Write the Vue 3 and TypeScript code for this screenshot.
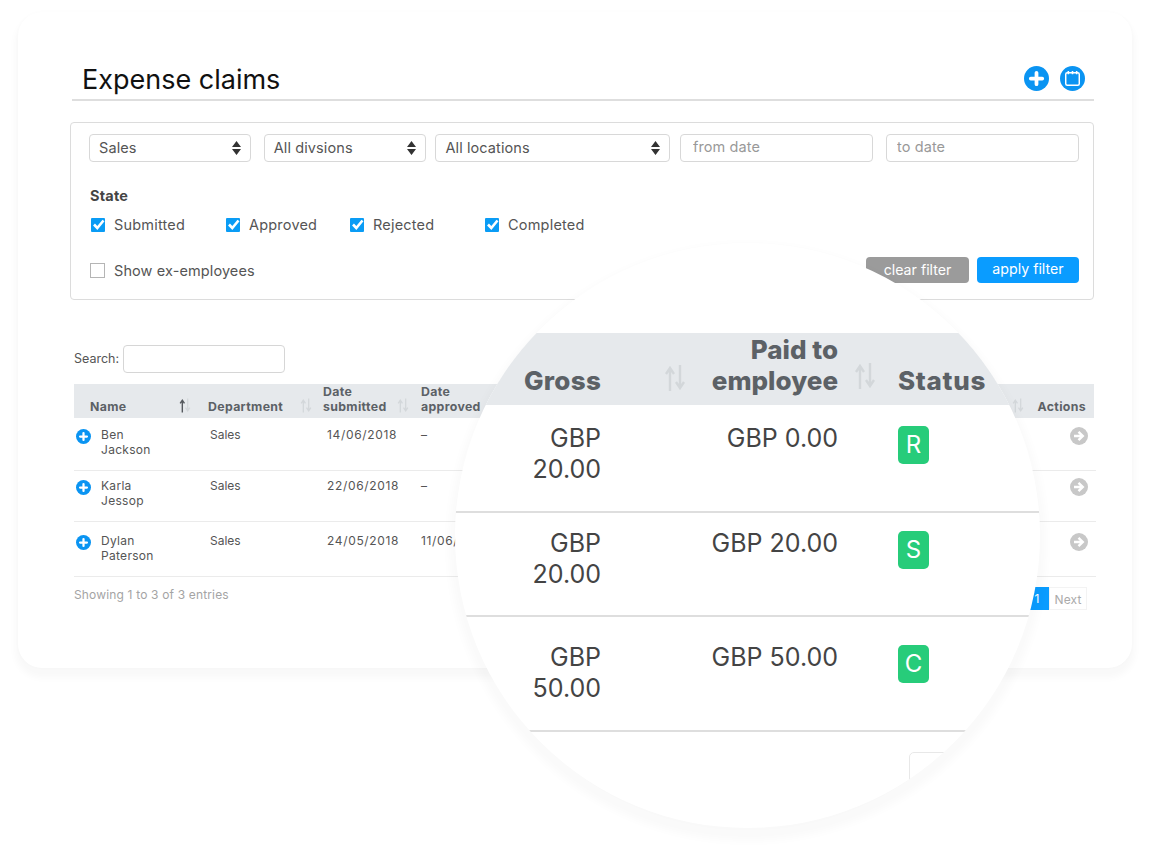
<script setup lang="ts">
const selects = [
  { label: 'Sales', cls: 'w1' },
  { label: 'All divsions', cls: 'w2' },
  { label: 'All locations', cls: 'w3' },
]
const states = [
  { label: 'Submitted', cls: 's1' },
  { label: 'Approved', cls: 's2' },
  { label: 'Rejected', cls: 's3' },
  { label: 'Completed', cls: 's4' },
]
const rows = [
  { first: 'Ben', last: 'Jackson', dept: 'Sales', sub: '14/06/2018', app: '–', cls: 'r1' },
  { first: 'Karla', last: 'Jessop', dept: 'Sales', sub: '22/06/2018', app: '–', cls: 'r2' },
  { first: 'Dylan', last: 'Paterson', dept: 'Sales', sub: '24/05/2018', app: '11/06/2018', cls: 'r3' },
]
const zoomRows = [
  { gross: '20.00', paid: 'GBP 0.00', status: 'R', cls: 'z1' },
  { gross: '20.00', paid: 'GBP 20.00', status: 'S', cls: 'z2' },
  { gross: '50.00', paid: 'GBP 50.00', status: 'C', cls: 'z3' },
]
</script>

<template>
  <div class="stage">
    <svg class="defs" width="0" height="0" aria-hidden="true">
      <symbol id="sort" viewBox="0 0 22 28">
        <path d="M6 27V6M2 10l4-6 4 6" fill="none" stroke="currentColor" stroke-width="2.4" />
        <path d="M16 1v21M12 18l4 6 4-6" fill="none" stroke="currentColor" stroke-width="2.4" />
      </symbol>
      <symbol id="sort-up" viewBox="0 0 22 28">
        <path d="M6 27V6M2 10l4-6 4 6" fill="none" stroke="#55595e" stroke-width="2.6" />
        <path d="M16 1v21M12 18l4 6 4-6" fill="none" stroke="#d3d7da" stroke-width="2.4" />
      </symbol>
      <symbol id="plus" viewBox="0 0 24 24">
        <circle cx="12" cy="12" r="12" fill="#0a94f2" />
        <path d="M12 6.500v11M6.500 12h11" stroke="#fff" stroke-width="3.6" stroke-linecap="round" />
      </symbol>
      <symbol id="go" viewBox="0 0 18 18">
        <circle cx="9" cy="9" r="9" fill="#c8c8c8" />
        <path d="M4 9h8M8.500 4.800 12.800 9l-4.300 4.200" fill="none" stroke="#fff" stroke-width="2.4" />
      </symbol>
      <symbol id="check" viewBox="0 0 15 15">
        <rect width="14" height="14" y="1" rx="1" fill="#0a9cf5" />
        <path d="M3 7.500 6.300 11 12.500 3.500" fill="none" stroke="#fff" stroke-width="2.6" />
      </symbol>
      <symbol id="updown" viewBox="0 0 9 14">
        <path d="M4.500 0 9 6H0zM4.500 14 0 8h9z" fill="#333" />
      </symbol>
    </svg>

    <main class="card">
      <header class="head">
        <h1>Expense claims</h1>
        <div class="head-icons">
          <svg class="round"><use href="#plus" /></svg>
          <svg class="round" viewBox="0 0 24 24">
            <circle cx="12" cy="12" r="12" fill="#0a94f2" />
            <rect x="5.500" y="6.500" width="13" height="12" rx="1.500" fill="none" stroke="#fff" stroke-width="1.400" />
            <path d="M8 4.800v3M12 4.800v3M16 4.800v3" stroke="#fff" stroke-width="1.500" />
          </svg>
        </div>
      </header>

      <section class="panel">
        <div class="filters">
          <div v-for="s in selects" :key="s.label" class="select" :class="s.cls">
            <span>{{ s.label }}</span>
            <svg class="updown"><use href="#updown" /></svg>
          </div>
          <input class="date d1" placeholder="from date" />
          <input class="date d2" placeholder="to date" />
        </div>

        <h2>State</h2>
        <div class="states">
          <label v-for="s in states" :key="s.label" class="state" :class="s.cls">
            <svg class="tick"><use href="#check" /></svg>
            <span>{{ s.label }}</span>
          </label>
        </div>

        <div class="panel-foot">
          <label class="ex"><i class="box"></i><span>Show ex-employees</span></label>
          <div class="buttons">
            <button class="btn grey">clear filter</button>
            <button class="btn blue">apply filter</button>
          </div>
        </div>
      </section>

      <div class="search">
        <span>Search:</span>
        <input />
      </div>

      <div class="thead trow">
        <div class="c-name">
          <span>Name</span>
          <svg class="sort"><use href="#sort-up" /></svg>
        </div>
        <div class="c-dept">
          <span>Department</span>
          <svg class="sort"><use href="#sort" /></svg>
        </div>
        <div class="c-sub">
          <span>Date<br />submitted</span>
          <svg class="sort"><use href="#sort" /></svg>
        </div>
        <div class="c-app"><span>Date<br />approved</span></div>
        <div class="c-act">
          <svg class="sort"><use href="#sort" /></svg>
          <span>Actions</span>
        </div>
      </div>

      <div v-for="r in rows" :key="r.first" class="tbody trow" :class="r.cls">
        <div class="c-name cell-name">
          <svg class="expand"><use href="#plus" /></svg>
          <span>{{ r.first }}<br />{{ r.last }}</span>
        </div>
        <div class="c-dept">{{ r.dept }}</div>
        <div class="c-sub">{{ r.sub }}</div>
        <div class="c-app">{{ r.app }}</div>
        <div class="c-act"><svg class="go"><use href="#go" /></svg></div>
      </div>

      <footer class="tfoot">
        <span>Showing 1 to 3 of 3 entries</span>
        <div class="pager">
          <span class="page">1</span>
          <span class="next">Next</span>
        </div>
      </footer>
    </main>

    <aside class="lens">
      <div class="z-head z-grid">
        <div class="z1c"><span>Gross</span><svg class="z-sort s-a"><use href="#sort" /></svg></div>
        <div class="z2c"><span>Paid to<br />employee</span><svg class="z-sort s-b"><use href="#sort" /></svg></div>
        <div class="z3c"><span>Status</span></div>
      </div>
      <div v-for="z in zoomRows" :key="z.status" class="z-row z-grid" :class="z.cls">
        <div class="z-gross">GBP<br />{{ z.gross }}</div>
        <div class="z-paid">{{ z.paid }}</div>
        <div><span class="badge">{{ z.status }}</span></div>
      </div>
      <div class="z-page"></div>
    </aside>
  </div>
</template>

<style scoped>
.stage {
  position: relative;
  width: 1150px;
  height: 852px;
  overflow: hidden;
  background: #fff;
  font-family: Inter, "Liberation Sans", sans-serif;
  color: #555;
}
.defs { position: absolute; }
.card {
  box-sizing: border-box;
  width: 1114px;
  height: 656px;
  margin: 12px 0 0 18px;
  padding: 48px 38px 0 52px;
  border-radius: 24px;
  background: #fff;
  box-shadow: 0 7px 7px 3px rgba(0, 0, 0, .028), 0 0 3px 1px rgba(0, 0, 0, .012);
}
.head {
  display: flex;
  align-items: center;
  justify-content: space-between;
  margin-left: 2px;
  padding: 1px 9px 2px 10px;
  border-bottom: 2px solid #dedede;
  height: 36px;
}
h1 { margin: 0; font-size: 27px; font-weight: 400; color: #111; letter-spacing: 0; }
.head-icons { display: flex; gap: 11px; margin-top: -2px; }
.round { width: 25px; height: 25px; display: block; }

.panel {
  box-sizing: border-box;
  height: 178px;
  margin-top: 21px;
  padding: 11px 14px 0 18px;
  border: 1px solid #dcdcdc;
  border-radius: 4px;
}
.filters { display: flex; height: 28px; }
.select, .date {
  box-sizing: border-box;
  height: 28px;
  border: 1px solid #d8d8d8;
  border-radius: 4px;
  font: 14.5px Inter, sans-serif;
  letter-spacing: .1px;
  color: #555;
  background: #fff;
}
.select { display: flex; align-items: center; justify-content: space-between; padding: 0 9px 2px; }
.w1 { width: 162px; }
.w2 { width: 163px; margin-left: 13px; }
.w3 { width: 235px; margin-left: 9px; }
.date { width: 193px; padding: 0 12px 3px; outline: none; }
.date::placeholder { color: #999; opacity: 1; }
.d1 { margin-left: 10px; }
.d2 { margin-left: 13px; padding-left: 10px; }
.updown { width: 9px; height: 14px; margin-top: 2px; }
h2 { margin: 25px 0 0 1px; font-size: 14.5px; line-height: 17px; font-weight: 700; color: #444; letter-spacing: .2px; }
.states { display: flex; margin: 11px 0 0 2px; height: 18px; }
.state { display: flex; align-items: center; gap: 8px; font-size: 14.5px; letter-spacing: .2px; }
.tick { width: 15px; height: 15px; }
.s1 { width: 135px; }
.s2 { width: 124px; }
.s3 { width: 135px; }
.panel-foot { display: flex; justify-content: space-between; align-items: center; margin-top: 24px; }
.ex { display: flex; align-items: center; gap: 9px; margin-left: 1px; font-size: 14.5px; letter-spacing: .1px; padding-top: 1px; }
.box { box-sizing: border-box; width: 15px; height: 15px; border: 1.500px solid #b5b5b5; }
.buttons { display: flex; gap: 8px; }
.btn {
  box-sizing: border-box;
  height: 26px;
  border: 0;
  border-radius: 4px;
  font: 14.2px Inter, sans-serif;
  color: #fff;
}
.grey { width: 103px; padding: 0 0 1px; background: #9b9b9b; }
.blue { width: 102px; padding: 0 0 3px; background: #0a9cff; }

.search { display: flex; align-items: center; gap: 4px; margin: 45px 0 0 4px; font-size: 12.500px; }
.search span { padding-bottom: 2px; }
.search input {
  box-sizing: border-box;
  width: 162px;
  height: 28px;
  border: 1px solid #d6d6d6;
  border-radius: 4px;
  outline: none;
}
.trow {
  display: grid;
  grid-template-columns: 134px 115px 98px 1fr 94px;
  margin-left: 4px;
  font-size: 12px;
  line-height: 15px;
}
.thead {
  height: 34px;
  margin-top: 11px;
  background: #e6e9ec;
  font-weight: 700;
  font-size: 12.300px;
  color: #5c6166;
  align-items: end;
  letter-spacing: .35px;
}
.thead > div { display: flex; align-items: flex-end; padding-bottom: 4px; position: relative; }
.thead .c-name { padding-left: 16px; }
.sort { position: absolute; width: 12px; height: 15px; bottom: 5px; color: #d3d7da; }
.c-name .sort { left: 105px; }
.c-dept .sort { left: 92px; }
.c-sub .sort { left: 74px; }
.thead .c-act { justify-content: flex-end; padding-right: 8px; }
.c-act .sort { left: 12px; }
.tbody { margin-right: -2px; padding-top: 9px; border-bottom: 1px solid #ebebeb; box-sizing: border-box; color: #555; }
.r1 { height: 53px; }
.r2 { height: 51px; padding-top: 7px; }
.r3 { height: 55px; padding-top: 11px; }
.tbody .c-dept { padding-left: 2px; }
.tbody .c-sub { padding-left: 4px; letter-spacing: .65px; }
.tbody .c-app { letter-spacing: .65px; }
.cell-name { display: flex; gap: 10px; padding-left: 2px; letter-spacing: .3px; }
.expand { width: 15px; height: 15px; margin-top: 2px; }
.go { width: 18px; height: 18px; display: block; margin: 0 0 0 68px; }
.tfoot { display: flex; justify-content: space-between; align-items: flex-start; margin: 10px 7px 0 4px; font-size: 12px; line-height: 16px; letter-spacing: .16px; color: #a4a4a4; }
.pager { display: flex; height: 23px; line-height: 23px; font-size: 12px; }
.page { width: 24px; background: #0a9cff; color: #fff; text-align: center; }
.next { width: 38px; text-align: center; border: 1px solid #f3f3f3; box-sizing: border-box; color: #aaa; }

.lens {
  position: absolute;
  left: 455px;
  top: 243px;
  box-sizing: border-box;
  width: 585px;
  height: 585px;
  padding-top: 90px;
  overflow: hidden;
  border-radius: 50%;
  background: #fff;
  box-shadow: 0 7px 8px 6px rgba(0, 0, 0, .025);
  font-size: 25px;
  line-height: 31px;
  color: #444;
}
.z-grid { display: grid; grid-template-columns: 195px 230px 1fr; }
.z-head {
  box-sizing: border-box;
  height: 72px;
  padding-bottom: 9px;
  background: #e6e9ec;
  font-weight: 800;
  font-size: 26px;
  letter-spacing: .3px;
  color: #5c6166;
  align-items: end;
  line-height: 31px;
}
.z-head > div { position: relative; }
.z1c { padding-left: 69px; }
.z2c { text-align: right; padding-right: 42px; letter-spacing: 0; }
.z3c { padding-left: 18px; letter-spacing: .7px; }
.z-sort { position: absolute; width: 22px; height: 28px; color: #d3d7da; bottom: 3px; }
.s-a { left: 209px; bottom: 4px; }
.s-b { left: 204px; bottom: 6px; }
.z-row { box-sizing: border-box; border-bottom: 2px solid #dedede; }
.z1 { height: 108px; padding-top: 18px; }
.z2 { height: 104px; padding-top: 15px; }
.z3 { height: 115px; padding-top: 25px; }
.z-gross { text-align: right; padding-right: 49px; }
.z-paid { text-align: right; padding-right: 42px; }
.z-row > div:last-child { padding-left: 18px; }
.badge {
  display: block;
  width: 31px;
  height: 38px;
  border-radius: 5px;
  background: #27cc7a;
  color: #fff;
  text-align: center;
  line-height: 38px;
  font-size: 24px;
  margin-top: 3px;
}
.z-page {
  width: 70px;
  height: 60px;
  margin: 20px 0 0 454px;
  border: 1px solid #e8e8e8;
  border-radius: 5px;
}
</style>
